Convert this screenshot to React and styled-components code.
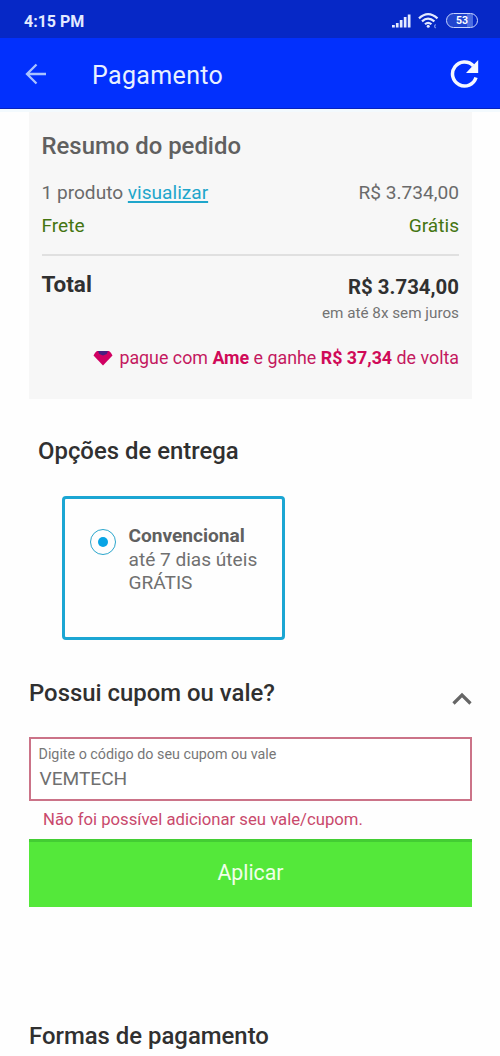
import React from "react";
import styled, { createGlobalStyle } from "styled-components";

const GlobalStyle = createGlobalStyle`
  * { box-sizing: border-box; }
  html, body { margin: 0; padding: 0; background: #fefefe; }
  body { font-family: Roboto, "Liberation Sans", sans-serif; color: #666; }
  svg { display: block; flex: none; }
  h1, h2, p { margin: 0; }
`;

const Screen = styled.div`
  width: 500px;
  height: 1056px;
  overflow: hidden;
  display: flex;
  flex-direction: column;
`;

const StatusBar = styled.header`
  height: 38px;
  flex: none;
  display: flex;
  align-items: center;
  justify-content: space-between;
  padding: 3px 22px 0 24px;
  background: #0628c6;
  color: #e3eaff;
`;

const Clock = styled.span`
  padding-top: 2px;
  font-size: 16px;
  line-height: 20px;
  font-weight: 700;
`;

const StatusIcons = styled.div`
  display: flex;
  align-items: center;
  gap: 7px;
`;

const Battery = styled.span`
  width: 32px;
  height: 15px;
  border: 1.5px solid #c9d5ff;
  border-radius: 8px;
  display: flex;
  align-items: center;
  justify-content: center;
  background: linear-gradient(90deg, #2145cf 0 68%, #4b6ce0 68% 88%, #0628c6 88%);
  font-size: 10.5px;
  line-height: 12px;
  font-weight: 700;
  color: #fff;
`;

const AppBar = styled.nav`
  height: 71px;
  flex: none;
  display: flex;
  align-items: center;
  padding: 1px 20px 0 25px;
  background: #0230fd;
  border-bottom: 1px solid #0722bd;
`;

const AppTitle = styled.h1`
  flex: 1;
  margin-left: 45px;
  padding-top: 4px;
  font-size: 25px;
  line-height: 30px;
  font-weight: 400;
  letter-spacing: 0.35px;
  color: #e9f0ff;
`;

const Content = styled.main`
  display: flex;
  flex-direction: column;
  padding: 0 28px 0 29px;
  border-top: 3px solid #f3fafe;
`;

const Heading = styled.h2`
  font-size: 23.9px;
  line-height: 28px;
  font-weight: 500;
  color: ${(p) => p.$color || "#303030"};
`;

const Summary = styled.section`
  height: 287px;
  padding: 20px 13px 0 12.5px;
  background: #f7f7f7;
`;

const SummaryRow = styled.div`
  display: flex;
  justify-content: space-between;
  margin-top: ${(p) => p.$top || 0}px;
  font-size: 19.1px;
  line-height: 24px;
  color: ${(p) => p.$color || "#6a6a6a"};
`;

const Link = styled.a`
  color: #1fa6cb;
  text-decoration: underline;
  text-decoration-thickness: 1.5px;
  text-underline-offset: 2px;
`;

const Divider = styled.div`
  height: 2px;
  margin-top: 16px;
  background: #e0e0e0;
`;

const TotalRow = styled.div`
  display: flex;
  justify-content: space-between;
  margin-top: 15px;
  color: #303030;
  font-weight: 700;
`;

const TotalLabel = styled.span`
  font-size: 22.5px;
  line-height: 26px;
`;

const TotalValue = styled.span`
  padding-top: 3px;
  font-size: 20.4px;
  line-height: 26px;
`;

const Installments = styled.p`
  text-align: right;
  font-size: 15.25px;
  line-height: 20px;
  margin-top: 3px;
  color: #737373;
`;

const Cashback = styled.div`
  display: flex;
  justify-content: flex-end;
  align-items: center;
  gap: 6.5px;
  margin-top: 24px;
  font-size: 17.83px;
  line-height: 22px;
  white-space: nowrap;
  color: #c4195f;
  b { color: #d00a58; }
`;

const Delivery = styled.section`
  padding: 38px 0 0 9px;
`;

const DeliveryCard = styled.label`
  width: 223px;
  height: 144px;
  margin: 31px 0 0 24px;
  padding: 25px 0 0 25px;
  display: flex;
  gap: 12.5px;
  border: 3px solid #1ba6d3;
  border-radius: 4px;
`;

const Radio = styled.span`
  width: 26px;
  height: 26px;
  margin-top: 5px;
  flex: none;
  display: flex;
  align-items: center;
  justify-content: center;
  border: 1.5px solid #2ba6cc;
  border-radius: 50%;
  &::after {
    content: "";
    width: 10px;
    height: 10px;
    border-radius: 50%;
    background: #08a4e5;
  }
`;

const DeliveryText = styled.div`
  font-size: 19.1px;
  line-height: 23.6px;
  white-space: nowrap;
  color: #707070;
  b { display: block; color: #606060; }
`;

const CouponHeader = styled.div`
  display: flex;
  justify-content: space-between;
  margin-top: 39px;
`;

const CouponField = styled.div`
  height: 64px;
  margin-top: 30px;
  padding: 6px 7.5px 0;
  border: 2px solid #cb7388;
  background: #fff;
`;

const FieldLabel = styled.div`
  font-size: 14.3px;
  line-height: 18px;
  color: #777;
`;

const FieldValue = styled.div`
  margin-top: 4px;
  padding-left: 1px;
  font-size: 19.1px;
  line-height: 24px;
  color: #707070;
`;

const FieldError = styled.p`
  margin-top: 8px;
  padding-left: 14px;
  font-size: 16.7px;
  line-height: 22px;
  color: #c9496c;
`;

const ApplyButton = styled.button`
  height: 68px;
  margin-top: 8px;
  padding: 0 0 4px;
  border: 0;
  border-top: 3px solid #43cd33;
  background: #54e83a;
  color: #f1ffe9;
  font: 400 21.3px/26px Roboto, sans-serif;
`;

const Payment = styled.section`
  padding-top: 115px;
`;

export default function App() {
  return (
    <Screen>
      <GlobalStyle />
      <StatusBar>
        <Clock>4:15 PM</Clock>
        <StatusIcons>
          <svg width="19" height="14" viewBox="0 0 19 14" fill="#e3eaff">
            <rect x="0" y="11" width="2.8" height="2.5" />
            <rect x="3.9" y="9" width="2.7" height="4.5" />
            <rect x="7.8" y="6" width="2.7" height="7.5" />
            <rect x="11.8" y="3" width="2.7" height="10.5" />
            <rect x="15.8" y="0.5" width="2.7" height="13" />
          </svg>
          <svg width="21" height="16" viewBox="0 0 21 16" fill="none" stroke="#e3eaff" strokeWidth="2.2">
            <path d="M1 5.4Q10 -3 19.5 5.4M4 8.4Q10 2.7 16.4 8.4M7 11.3Q10.2 8.4 13.4 11.3" />
            <circle cx="10.2" cy="13.2" r="1.5" fill="#e3eaff" stroke="none" />
            <path d="M17.8 11.5q-2.5 1.7 0 3.6" stroke="#7690eb" strokeWidth="1.3" />
          </svg>
          <Battery>53</Battery>
        </StatusIcons>
      </StatusBar>
      <AppBar>
        <svg width="22" height="22" viewBox="0 0 22 22" fill="none" stroke="#a9c2ff" strokeWidth="2.3">
          <path d="M21 11H2M11.5 1.5L2 11L11.5 20.5" />
        </svg>
        <AppTitle>Pagamento</AppTitle>
        <svg width="30" height="30" viewBox="0 0 30 30">
          <path d="M23.3 6.8A12 12 0 1 0 26 18.5" fill="none" stroke="#f5f8ff" strokeWidth="3.5" />
          <path d="M28.2 1V14H16z" fill="#f5f8ff" />
        </svg>
      </AppBar>
      <Content>
        <Summary>
          <Heading $color="#606060">Resumo do pedido</Heading>
          <SummaryRow $top={21}>
            <span>1 produto <Link>visualizar</Link></span>
            <span>R$ 3.734,00</span>
          </SummaryRow>
          <SummaryRow $top={9} $color="#447511">
            <span>Frete</span>
            <span>Grátis</span>
          </SummaryRow>
          <Divider />
          <TotalRow>
            <TotalLabel>Total</TotalLabel>
            <TotalValue>R$ 3.734,00</TotalValue>
          </TotalRow>
          <Installments>em até 8x sem juros</Installments>
          <Cashback>
            <svg width="20" height="16" viewBox="0 0 20 16">
              <path d="M4 1H16Q18 2 19.5 5.5L10 15.5L0.5 5.5Q2 2 4 1Z" fill="#d00062" />
              <path d="M5 1H15L13.8 4L10 5.4L6.2 4Z" fill="#452080" />
            </svg>
            <span>pague com <b>Ame</b> e ganhe <b>R$ 37,34</b> de volta</span>
          </Cashback>
        </Summary>
        <Delivery>
          <Heading>Opções de entrega</Heading>
          <DeliveryCard>
            <Radio />
            <DeliveryText>
              <b>Convencional</b>
              <div>até 7 dias úteis</div>
              <div>GRÁTIS</div>
            </DeliveryText>
          </DeliveryCard>
        </Delivery>
        <CouponHeader>
          <Heading>Possui cupom ou vale?</Heading>
          <svg width="20" height="28" viewBox="0 0 20 28" fill="none" stroke="#666" strokeWidth="3.2">
            <path d="M1.5 24.5L10 16L18.5 24.5" />
          </svg>
        </CouponHeader>
        <CouponField>
          <FieldLabel>Digite o código do seu cupom ou vale</FieldLabel>
          <FieldValue>VEMTECH</FieldValue>
        </CouponField>
        <FieldError>Não foi possível adicionar seu vale/cupom.</FieldError>
        <ApplyButton>Aplicar</ApplyButton>
        <Payment>
          <Heading>Formas de pagamento</Heading>
        </Payment>
      </Content>
    </Screen>
  );
}
